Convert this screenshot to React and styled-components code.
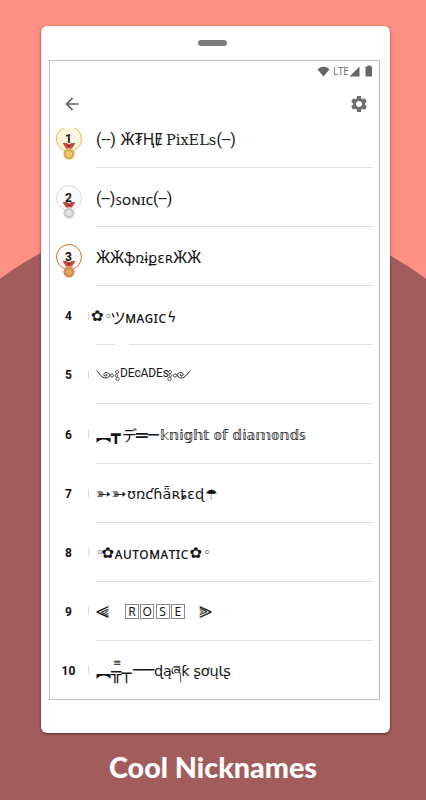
import styled, { createGlobalStyle } from 'styled-components'

const GlobalStyle = createGlobalStyle`
    body {
        margin: 0;
        overflow: hidden;
    }
`;

const sans = `Roboto, "Noto Sans", "DejaVu Sans", "Noto Sans CJK JP", sans-serif`;
const noto = `"Noto Sans", "DejaVu Sans", "Noto Sans CJK JP", sans-serif`;
const dejavu = `"DejaVu Sans", "Noto Sans", "Noto Sans CJK JP", sans-serif`;
const cjk = `"Noto Sans CJK JP", "DejaVu Sans", sans-serif`;
const serif = `"DejaVu Serif", "Liberation Serif", serif`;

const Page = styled.div`
    box-sizing: border-box;
    width: 426px;
    height: 800px;
    padding-top: 26px;
    display: flex;
    flex-direction: column;
    align-items: center;
    background: radial-gradient(circle at 213px 569px, #a25c5c 359.5px, #ff9083 360.5px);
`;

const Phone = styled.div`
    box-sizing: border-box;
    width: 349px;
    height: 707px;
    margin-left: 5px;
    padding: 14px 10px 0 8px;
    border-radius: 6px;
    background: #fff;
    box-shadow: 0 1px 3px rgba(0, 0, 0, .55);
    display: flex;
    flex-direction: column;
    flex-shrink: 0;
`;

const Speaker = styled.div`
    width: 29px;
    height: 6px;
    border-radius: 3px;
    background: #7b7b7b;
    align-self: center;
    margin: 0 0 14px -4px;
`;

const Screen = styled.div`
    box-sizing: border-box;
    height: 640px;
    border: 1px solid #bdbdbd;
    display: flex;
    flex-direction: column;
`;

const StatusBar = styled.div`
    height: 20px;
    padding-right: 1px;
    display: flex;
    justify-content: flex-end;
    align-items: center;
    font-family: "Open Sans", sans-serif;
    font-size: 10px;
    color: #6a6a6a;
`;

const Lte = styled.span`
    width: 15px;
    margin: 0 1px 0 3px;
    letter-spacing: -.3px;
`;

const Toolbar = styled.div`
    height: 47px;
    box-sizing: border-box;
    padding: 0 10px 1px 12px;
    display: flex;
    justify-content: space-between;
    align-items: center;
`;

const List = styled.div`
    flex: 1;
    overflow: hidden;
`;

const Rows = styled.div`
    margin-top: -19px;
`;

const Row = styled.div`
    height: 59.1px;
    display: flex;
`;

const Rank = styled.div`
    width: 37px;
    display: flex;
    align-items: center;
    justify-content: center;
    position: relative;
    padding-top: ${props => props.$plain ? 1 : 0}px;
    font-family: ${sans};
    font-size: 12px;
    font-weight: 700;
    color: #111;
`;

const Circle = styled.div`
    box-sizing: border-box;
    width: 26px;
    height: 26px;
    border: 1px solid ${props => props.$line};
    border-radius: 50%;
    background: ${props => props.$fill};
    display: flex;
    align-items: center;
    justify-content: center;
`;

const MedalIcon = styled.svg`
    position: absolute;
    left: 12px;
    top: 34px;
`;

const Tick = styled.div`
    width: 1px;
    height: 8px;
    margin: 0 7px 0 1px;
    align-self: center;
    background: ${props => props.$show ? '#d8d8d8' : 'transparent'};
`;

const Body = styled.div`
    width: 277px;
    display: flex;
    flex-direction: column;
`;

const Name = styled.div`
    flex: 1;
    display: flex;
    align-items: center;
    padding-top: 3px;
    margin-left: ${props => props.$pull || 0}px;
`;

const Run = styled.span`
    width: ${props => props.$w}px;
    flex-shrink: 0;
    font-family: ${props => props.$font || sans};
    font-size: ${props => props.$size || 16}px;
    font-weight: ${props => props.$bold ? 700 : 400};
    letter-spacing: ${props => props.$space || 0}px;
    line-height: 20px;
    padding-top: ${props => props.$down || 0}px;
    padding-bottom: ${props => props.$up || 0}px;
    white-space: pre;
    color: #161616;
`;

const Boxed = styled.span`
    box-sizing: border-box;
    width: 14px;
    height: 15px;
    margin: 0 1.3px 1px 0;
    border: 1px solid #888;
    font-family: ${noto};
    font-size: 12px;
    line-height: 13px;
    text-align: center;
    color: #161616;
`;

const Stack = styled.span`
    width: 22px;
    display: flex;
    flex-direction: column;
    padding-bottom: 4px;
    font-family: ${dejavu};
    color: #161616;
`;

const StackTop = styled.span`
    padding-left: 2px;
    font-size: 10px;
    line-height: 8px;
`;

const StackBottom = styled.span`
    font-size: 17px;
    line-height: 12px;
    white-space: pre;
`;

const Separator = styled.div`
    height: 1px;
    background: ${props => props.$gap
        ? `linear-gradient(to right, #e0e0e0 19px, transparent 19px, transparent 33px, #e0e0e0 33px)`
        : `#e0e0e0`};
`;

const Caption = styled.div`
    margin-top: 14px;
    font-family: Lato, "Open Sans", sans-serif;
    font-size: 28.7px;
    font-weight: 900;
    line-height: 40px;
    white-space: nowrap;
    color: #fff;
`;

const medals = {
    1: { line: '#e8b83c', fill: '#fdf5e0', disc: '#e0b04e', inner: '#edc873' },
    2: { line: '#dedede', fill: '#fafafa', disc: '#cfcfcf', inner: '#e2e2e2' },
    3: { line: '#b9783c', fill: '#fff8f3', disc: '#d58f4e', inner: '#e5a56a' },
};

const names = [
    [
        { t: '(--)', w: 24.5, size: 16 },
        { t: 'Ӂ₮ⱧɆ', w: 45.5, size: 15.5, space: -.3 },
        { t: 'PixELs', w: 50.5, font: serif, size: 14.5 },
        { t: '(--)', w: 20, size: 16, space: -.2 },
    ],
    [
        { t: '(--)', w: 19.5, size: 16, space: -.2 },
        { t: 'ꜱᴏɴɪᴄ', w: 37.5, font: noto, size: 15 },
        { t: '(--)', w: 20, size: 16, space: -.2 },
    ],
    [
        { t: 'ӁӁ', w: 28, size: 15.5 },
        { t: 'ֆռɨքɛʀ', w: 49, font: dejavu, size: 14 },
        { t: 'ӁӁ', w: 28, size: 15.5 },
    ],
    [
        { t: '✿', w: 13.5, font: dejavu, size: 15, bold: true, up: 2 },
        { t: '◦', w: 5.5, font: dejavu, size: 13 },
        { t: 'ツ', w: 15, font: cjk, size: 16 },
        { t: 'ᴍᴀɢɪᴄ', w: 42, font: noto, size: 15.5 },
        { t: 'ϟ', w: 10, font: dejavu, size: 14.5 },
    ],
    [
        { ornament: true },
        { t: 'DEcADEs', w: 47, size: 12, space: -.1, up: 5 },
        { ornament: true, flip: true },
    ],
    [
        { t: '︻', w: 15, font: cjk, size: 15 },
        { t: '┳', w: 11, font: dejavu },
        { t: 'デ', w: 14, font: cjk, size: 15 },
        { t: '═', w: 12, font: dejavu, size: 19 },
        { t: '─', w: 12, font: dejavu, size: 18 },
        { t: '𝕜𝕟𝕚𝕘𝕙𝕥 𝕠𝕗 𝕕𝕚𝕒𝕞𝕠𝕟𝕕𝕤', w: 146, font: dejavu, size: 14, space: -.3 },
    ],
    [
        { t: '➳', w: 15.5, font: dejavu, size: 18 },
        { t: '➳', w: 15.5, font: dejavu, size: 18 },
        { t: 'ʊռƈɦǟʀȶɛɖ', w: 78, font: dejavu, size: 14.5 },
        { t: '☂', w: 12, font: dejavu, size: 14 },
    ],
    [
        { t: '◦', w: 5.5, font: dejavu, size: 13 },
        { t: '✿', w: 13, font: dejavu, size: 15, bold: true, up: 1 },
        { t: 'ᴀᴜᴛᴏᴍᴀᴛɪᴄ', w: 75, font: noto, size: 15.5 },
        { t: '✿', w: 13.5, font: dejavu, size: 15, bold: true, up: 1 },
        { t: '◦', w: 6, font: dejavu, size: 13 },
    ],
    [
        { t: '⫷', w: 29, font: dejavu, size: 23, up: 4 },
        { boxes: 'ROSE' },
        { t: ' ', w: 13 },
        { t: '⫸', w: 14, font: dejavu, size: 23, up: 4 },
    ],
    [
        { t: '︻', w: 15, font: cjk, size: 15 },
        { stack: ['≡', '╦┬'] },
        { t: '──', w: 21, font: dejavu, size: 17.5, up: 2 },
        { t: 'ɖąཞƙ ʂơųƖʂ', w: 80, font: dejavu, size: 14.5, space: -.3 },
    ],
];

const Flourish = ({ flip }) => (
    <svg width="24" height="14" viewBox="0 0 24 14" fill="none" stroke="#222" strokeWidth="1">
        <g transform={flip ? 'translate(24 0) scale(-1 1)' : undefined}>
            <path d="M0.500 1.500c3 3 5 7.500 9.500 7.500 4.500 0 4.500-5.500 0.500-5.500-3.500 0-3.500 4-0.500 3.500 1.500-.3 1.200-1.800 0-1.800" />
            <circle cx="16" cy="6.5" r="1.6" strokeWidth=".8" />
            <circle cx="21" cy="3" r="1.5" strokeWidth=".7" />
            <circle cx="20.5" cy="6.500" r="1.2" strokeWidth=".7" />
            <circle cx="21.5" cy="10" r="1.7" strokeWidth=".7" />
        </g>
    </svg>
);

const Medal = ({ rank }) => (
    <MedalIcon width="14" height="18" viewBox="0 0 14 18">
        <path d="M0.5 0h4l2.5 2 2.5-2h4l-3.5 5.5h-6z" fill="#c9483c" />
        <path d="M4.5 0l2.5 5 2.5-5-2.5 2z" fill="#8f2d27" />
        <circle cx="7" cy="11" r="5.6" fill={medals[rank].disc} />
        <circle cx="7" cy="11" r="3.6" fill={medals[rank].inner} stroke="#0002" strokeWidth=".6" />
    </MedalIcon>
);

const Piece = ({ run }) => {
    if(run.ornament) return <Flourish flip={run.flip} />
    if(run.boxes) return run.boxes.split('').map(c => <Boxed key={c}>{c}</Boxed>)
    if(run.stack) return (
        <Stack>
            <StackTop>{run.stack[0]}</StackTop>
            <StackBottom>{run.stack[1]}</StackBottom>
        </Stack>
    )
    return (
        <Run
            $w={run.w}
            $font={run.font}
            $size={run.size}
            $space={run.space}
            $down={run.down}
            $up={run.up}
            $bold={run.bold}
        >
            {run.t}
        </Run>
    )
}

const NameRow = ({ rank, runs }) => (
    <Row>
        <Rank $plain={rank > 3}>
            {medals[rank] ? <>
                <Circle $line={medals[rank].line} $fill={medals[rank].fill}>{rank}</Circle>
                <Medal rank={rank} />
            </> : rank}
        </Rank>
        <Tick $show={rank > 3} />
        <Body>
            <Name $pull={rank === 4 ? -5 : 0}>
                {runs.map((run, i) => <Piece key={i} run={run} />)}
            </Name>
            <Separator $gap={rank === 4} />
        </Body>
    </Row>
);

export default function App() {
    return (
        <Page>
            <GlobalStyle />
            <Phone>
                <Speaker />
                <Screen>
                    <StatusBar>
                        <svg width="13" height="11" viewBox="0 0 14 11" fill="#666">
                            <path d="M0.5 3q6.500-5 13 0L7 10.800z" />
                        </svg>
                        <Lte>LTE</Lte>
                        <svg width="11" height="11" viewBox="0 0 11 11" fill="#666">
                            <path d="M10.500 0.500v10h-10z" />
                        </svg>
                        <svg width="18" height="12" viewBox="0 0 18 12" fill="#666">
                            <path d="M5.500 1.500h2v-1h3v1h1.500v10h-6.500z" />
                        </svg>
                    </StatusBar>
                    <Toolbar>
                        <svg width="20" height="20" viewBox="0 0 24 24" fill="#666">
                            <path d="M20 11H7.830l5.590-5.590L12 4l-8 8 8 8 1.410-1.410L7.830 13H20v-2z" />
                        </svg>
                        <svg width="20" height="20" viewBox="0 0 24 24" fill="#707070">
                            <path d="M19.140 12.940c.04-.3.06-.61.06-.94 0-.32-.02-.64-.07-.94l2.030-1.580c.18-.14.23-.41.12-.61l-1.920-3.320c-.12-.22-.37-.29-.59-.22l-2.390.96c-.5-.38-1.030-.7-1.620-.94l-.36-2.540c-.04-.24-.24-.41-.48-.41h-3.840c-.24 0-.43.17-.47.41l-.36 2.540c-.59.24-1.130.57-1.620.94l-2.390-.96c-.22-.08-.47 0-.59.22L2.740 8.870c-.12.21-.08.47.12.61l2.030 1.580c-.05.3-.09.63-.09.94s.02.64.07.94l-2.030 1.580c-.18.14-.23.41-.12.61l1.920 3.320c.12.22.37.29.59.22l2.390-.96c.5.38 1.030.7 1.620.94l.36 2.540c.05.24.24.41.48.41h3.840c.24 0 .44-.17.47-.41l.36-2.540c.59-.24 1.130-.56 1.620-.94l2.390.96c.22.08.47 0 .59-.22l1.920-3.320c.12-.22.07-.47-.12-.61l-2.010-1.580zM12 15.600c-1.980 0-3.600-1.620-3.600-3.600s1.620-3.600 3.600-3.600 3.600 1.620 3.600 3.600-1.620 3.600-3.600 3.600z" />
                        </svg>
                    </Toolbar>
                    <List>
                        <Rows>
                            {names.map((runs, i) => <NameRow key={i} rank={i + 1} runs={runs} />)}
                        </Rows>
                    </List>
                </Screen>
            </Phone>
            <Caption>Cool Nicknames</Caption>
        </Page>
    )
}
